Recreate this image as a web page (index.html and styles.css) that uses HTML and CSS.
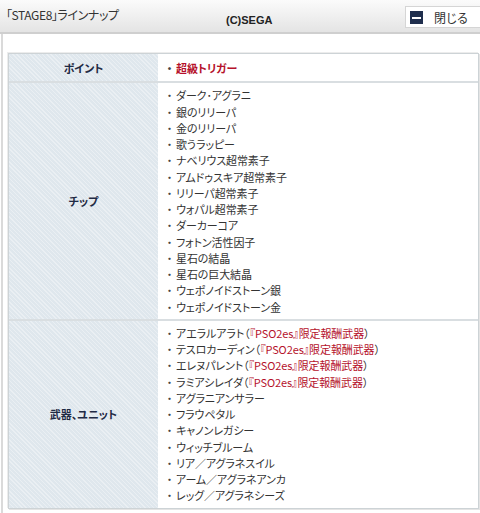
FILE: index.html
```html
<!DOCTYPE html>
<html lang="ja">
<head>
<meta charset="utf-8">
<link rel="stylesheet" href="styles.css">
</head>
<body>
<div class="header">
  <div class="title">「STAGE8」ラインナップ</div>
  <div class="copy">(C)SEGA</div>
  <div class="close"><span class="close-icon"></span><span class="close-text">閉じる</span></div>
</div>
<div class="frame">
  <div class="table">
    <div class="row first">
      <div class="label">ポイント</div>
      <div class="cell"><ul><li class="red bold">超級トリガー</li></ul></div>
    </div>
    <div class="row">
      <div class="label">チップ</div>
      <div class="cell"><ul>
        <li>ダーク･アグラニ</li>
        <li>銀のリリーパ</li>
        <li>金のリリーパ</li>
        <li>歌うラッピー</li>
        <li>ナベリウス超常素子</li>
        <li>アムドゥスキア超常素子</li>
        <li>リリーパ超常素子</li>
        <li>ウォパル超常素子</li>
        <li>ダーカーコア</li>
        <li>フォトン活性因子</li>
        <li>星石の結晶</li>
        <li>星石の巨大結晶</li>
        <li>ウェポノイドストーン銀</li>
        <li>ウェポノイドストーン金</li>
      </ul></div>
    </div>
    <div class="row last">
      <div class="label">武器、ユニット</div>
      <div class="cell"><ul>
        <li>アエラルアラト（<span class="red">『PSO2es』限定報酬武器</span>）</li>
        <li>テスロカーディン（<span class="red">『PSO2es』限定報酬武器</span>）</li>
        <li>エレヌパレント（<span class="red">『PSO2es』限定報酬武器</span>）</li>
        <li>ラミアシレイダ（<span class="red">『PSO2es』限定報酬武器</span>）</li>
        <li>アグラニアンサラー</li>
        <li>フラウペタル</li>
        <li>キャノンレガシー</li>
        <li>ウィッチブルーム</li>
        <li>リア／アグラネスイル</li>
        <li>アーム／アグラネアンカ</li>
        <li>レッグ／アグラネシーズ</li>
      </ul></div>
    </div>
  </div>
</div>
</body>
</html>
```
FILE: styles.css
```css
html, body {
  margin: 0;
  padding: 0;
  background: #fff;
}
body {
  width: 480px;
  height: 513px;
  overflow: hidden;
  font-family: "Noto Sans CJK JP", "Noto Sans", sans-serif;
  font-feature-settings: "palt";
  color: #333;
  font-size: 11px;
}
.header {
  height: 32px;
  background: linear-gradient(#fbfbfb, #e4e4e4);
  border-bottom: 2px solid #cfcfcf;
  display: flex;
  align-items: flex-start;
  position: relative;
}
.title {
  flex: none;
  margin: 6px 0 0 6px;
  font-size: 12px;
  letter-spacing: -0.4px;
  color: #333;
  width: 220px;
}
.copy {
  flex: none;
  margin: 14px 0 0 0;
  font-size: 11px;
  font-weight: bold;
  font-family: "Liberation Sans", sans-serif;
  color: #222;
}
.close {
  flex: none;
  margin-left: auto;
  margin-top: 6px;
  width: 75px;
  height: 22px;
  background: #fff;
  border: 1px solid #d5d5d5;
  border-right: none;
  display: flex;
  align-items: center;
  box-sizing: border-box;
}
.close-icon {
  width: 13px;
  height: 13px;
  margin-left: 4px;
  background: #1f2e4d;
  position: relative;
}
.close-icon::after {
  content: "";
  position: absolute;
  left: 2px;
  right: 2px;
  top: 6px;
  height: 2px;
  background: #fff;
}
.close-text {
  margin-left: 11px;
  font-size: 12px;
  color: #333;
  letter-spacing: 0.3px;
}
.frame {
  border-left: 2px solid #dadada;
  margin-left: 1px;
  padding: 19px 0 0 5px;
  height: 480px;
  box-sizing: border-box;
}
.table {
  width: 469px;
  border: 1px solid #cdd3d6;
  box-shadow: 1px 1px 0 #e4e4e4, -1px -1px 0 #ececec;
}
.row {
  display: grid;
  grid-template-columns: 149px 1fr;
  border-bottom: 2px solid #d9dee1;
}
.row.last {
  border-bottom: none;
}
.label {
  background-color: #dfe7ed;
  background-image: repeating-linear-gradient(45deg, rgba(255,255,255,0.35) 0 1px, transparent 1px 3px);
  font-weight: bold;
  color: #1f2a44;
  display: flex;
  align-items: center;
  justify-content: center;
  font-size: 11px;
}
.cell {
  background: #fff;
  padding: 4px 0 4px 5px;
}
.row.first .cell {
  padding: 6px 0 5px 5px;
}
ul {
  list-style: none;
  margin: 0;
  padding: 0;
}
li {
  line-height: 16.25px;
  font-size: 11px;
  letter-spacing: -0.1px;
}
li::before {
  content: "・";
  display: inline-block;
  width: 13px;
  text-align: center;
  color: #444;
}
.red {
  color: #b5112b;
}
.bold {
  font-weight: bold;
}
```
